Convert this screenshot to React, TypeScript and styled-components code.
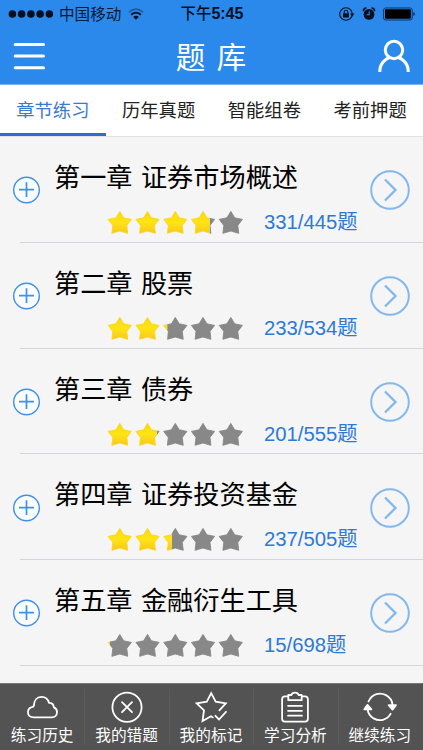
import React from "react";
import styled, { createGlobalStyle } from "styled-components";

const GlobalStyle = createGlobalStyle`
  * { box-sizing: border-box; }
  body {
    margin: 0;
    background: #f5f5f5;
    font-family: "Liberation Sans", "Noto Sans CJK SC", sans-serif;
    overflow: hidden;
  }
  svg { display: block; flex: none; }
`;

const Screen = styled.div`
  width: 423px;
  height: 750px;
  display: flex;
  flex-direction: column;
  background: #f5f5f5;
  overflow: hidden;
`;

const Header = styled.header`
  flex: none;
  height: 85px;
  background: #2c89ec;
  border-bottom: 1px solid #7cb5f3;
`;

const StatusBar = styled.div`
  height: 27px;
  padding: 0 7px 0 8px;
  display: grid;
  grid-template-columns: 1fr auto 1fr;
  align-items: center;
  color: #061a33;
`;

const StatusGroup = styled.div<{ $end?: boolean }>`
  display: flex;
  align-items: center;
  justify-content: ${(p) => (p.$end ? "flex-end" : "flex-start")};
`;

const Carrier = styled.span`
  margin: 0 7px 0 6px;
  font: 15.6px/27px "Noto Sans CJK SC", sans-serif;
  white-space: nowrap;
`;

const Clock = styled.div`
  font: 500 15.4px/27px "Liberation Sans", "Noto Sans CJK SC", sans-serif;
  color: #04101f;
  white-space: nowrap;
  b { font-size: 16px; }
`;

const NavBar = styled.div`
  height: 57px;
  padding: 0 12px 0 13px;
  display: grid;
  grid-template-columns: 1fr auto 1fr;
  align-items: center;
  color: #fff;
`;

const Title = styled.h1`
  margin: 0;
  font: 400 29.5px/57px "Noto Sans CJK SC", sans-serif;
  word-spacing: 5px;
  margin-left: -2px;
`;

const NavEnd = styled.div`
  justify-self: end;
`;

const Tabs = styled.nav`
  flex: none;
  height: 52px;
  display: grid;
  grid-template-columns: repeat(4, 1fr);
  background: #fff;
  border-bottom: 1px solid #e2e2e2;
`;

const Tab = styled.div<{ $active?: boolean }>`
  height: 51px;
  text-align: center;
  font: 18.3px/49px "Noto Sans CJK SC", sans-serif;
  color: ${(p) => (p.$active ? "#3b78d0" : "#222")};
  border-bottom: 3px solid ${(p) => (p.$active ? "#2f6bc9" : "transparent")};
`;

const List = styled.main`
  flex: 1;
  min-height: 0;
  overflow: hidden;
`;

const Row = styled.section`
  height: 105.75px;
  margin-left: 20px;
  padding: 2px 13px 0 0;
  display: flex;
  align-items: center;
  border-bottom: 1px solid #d2d5da;
`;

const Expand = styled.div`
  margin-left: -8px;
  width: 42px;
`;

const RowBody = styled.div`
  flex: 1;
  height: 100%;
  padding-top: 18px;
`;

const Chapter = styled.div`
  height: 38px;
  font: 26.2px/38px "Noto Sans CJK SC", sans-serif;
  word-spacing: 2.5px;
  color: #000;
  white-space: nowrap;
`;

const Progress = styled.div`
  margin: 15px 0 0 53px;
  display: flex;
  align-items: center;
  height: 25px;
`;

const Count = styled.div`
  margin-left: 19px;
  font: 20.3px/25px "Liberation Sans", "Noto Sans CJK SC", sans-serif;
  color: #2c7ad6;
  white-space: nowrap;
`;

const BottomBar = styled.footer`
  flex: none;
  height: 67px;
  display: grid;
  grid-template-columns: repeat(5, 1fr);
  margin-right: 1px;
  background: #535353;
  box-shadow: 1px 0 #535353;
  border-top: 1px solid #777;
`;

const BottomItem = styled.div`
  display: flex;
  flex-direction: column;
  align-items: center;
  padding-top: 5px;
  color: #fff;
  & + & {
    background: linear-gradient(#5c5c5c, #5c5c5c) 0 5px / 1px 55px no-repeat;
  }
`;

const BottomLabel = styled.div`
  font: 15.7px/22px "Noto Sans CJK SC", sans-serif;
  margin-top: -1px;
  white-space: nowrap;
`;

const starPath = (cx: number) =>
  `M${cx} 1.4L${cx + 3.9} 7.8L${cx + 11.6} 9.4L${cx + 7} 15.4L${cx + 7.9} 23.3L${cx} 21L${cx - 7.9} 23.3L${cx - 7} 15.4L${cx - 11.6} 9.4L${cx - 3.9} 7.8Z`;
const starCentres = [12.8, 40.5, 68.3, 96, 123.8];

function Stars({ id, ratio }: { id: string; ratio: number }) {
  return (
    <svg width="138" height="25" viewBox="0 0 138 25">
      <defs>
        <linearGradient id={`${id}-gold`} x1="0" y1="0" x2="0" y2="1">
          <stop offset="0" stopColor="#fbd90c" />
          <stop offset=".5" stopColor="#ffe414" />
          <stop offset="1" stopColor="#f8c71c" />
        </linearGradient>
        <clipPath id={`${id}-done`}>
          <rect width={138 * ratio} height="25" />
        </clipPath>
        <clipPath id={`${id}-left`}>
          <rect x={138 * ratio} width="138" height="25" />
        </clipPath>
      </defs>
      <g clipPath={`url(#${id}-left)`}>
        {starCentres.map((c) => (
          <path key={c} d={starPath(c)} fill="#888" stroke="#888" strokeWidth=".9" strokeLinejoin="round" />
        ))}
      </g>
      <g clipPath={`url(#${id}-done)`}>
        {starCentres.map((c) => (
          <path key={c} d={starPath(c)} fill={`url(#${id}-gold)`} stroke="#f9d71c" strokeWidth=".9" strokeLinejoin="round" />
        ))}
      </g>
    </svg>
  );
}

const PlusIcon = () => (
  <svg width="28" height="28" viewBox="0 0 28 28" fill="none" stroke="#3d91e6">
    <circle cx="14.5" cy="14" r="12.8" fill="#fafcff" strokeWidth="1.4" />
    <path d="M7 13.6H22M14.5 6.3V21" strokeWidth="1.7" />
  </svg>
);

const GoIcon = () => (
  <svg width="40" height="40" viewBox="0 0 40 40" fill="none" stroke="#83b8ee" strokeWidth="2">
    <circle cx="20" cy="20" r="18.8" />
    <path d="M15 9.5L25.5 20L15 30.5" strokeWidth="2.3" />
  </svg>
);

const SignalIcon = () => (
  <svg width="45" height="10" viewBox="0 0 45 10" fill="#04101f">
    {[4.4, 13.6, 22.9, 32.1, 41.4].map((x) => (
      <circle key={x} cx={x} cy="5" r="3.8" />
    ))}
  </svg>
);

const WifiIcon = () => (
  <svg width="16" height="12" viewBox="0 0 16 12" fill="none" strokeWidth="1.8">
    <path d="M1 4.1Q8 -1.9 15 4.1" stroke="#1d5ca0" />
    <path d="M3.2 6.7Q8 2.5 12.8 6.7" stroke="#04101f" />
    <path d="M5.2 8.9Q8 6.6 10.8 8.9L8 11.8Z" fill="#04101f" stroke="none" />
  </svg>
);

const StatusIcons = () => (
  <svg width="78" height="16" viewBox="0 0 78 16" fill="#04101f">
    <circle cx="8" cy="8" r="6.3" fill="none" stroke="#04101f" strokeWidth="1.1" />
    <path d="M12 7.5H16.5L14.2 10.4Z" />
    <rect x="5" y="7.2" width="6" height="4.2" rx=".4" />
    <path d="M6.2 7.3V6a1.8 1.8 0 0 1 3.6 0V7.3" fill="none" stroke="#04101f" strokeWidth="1.1" />
    <circle cx="31" cy="8.4" r="5.4" />
    <path d="M25.4 5.2A3.2 3.2 0 0 1 28.5 2M36.6 5.2A3.2 3.2 0 0 0 33.5 2" fill="none" stroke="#04101f" strokeWidth="1.6" />
    <path d="M31.2 5.2V8.8H28.6" fill="none" stroke="#2c89ec" strokeWidth="1.1" />
    <rect x="45.6" y="2" width="28.6" height="12" rx="2" fill="none" stroke="#0a2a50" strokeWidth=".9" />
    <rect x="47" y="3.3" width="25.8" height="9.4" rx=".8" fill="#000" />
    <path d="M75.5 6a2.3 2.3 0 0 1 0 4Z" />
  </svg>
);

const MenuIcon = () => (
  <svg width="33" height="30" viewBox="0 0 33 30" stroke="#fff" strokeWidth="3" strokeLinecap="round">
    <path d="M2.2 3.5H30.5M2.2 15.1H30.5M2.2 26.8H30.5" />
  </svg>
);

const UserIcon = () => (
  <svg width="34" height="34" viewBox="0 0 34 34" fill="none" stroke="#fff" strokeWidth="3">
    <circle cx="17" cy="11" r="8.7" />
    <path d="M2.8 33V32C2.8 25 7.8 20.2 12.4 18.5M21.6 18.5C26.2 20.2 31.2 25 31.2 32V33" />
  </svg>
);

const iconProps = {
  width: 36,
  height: 36,
  viewBox: "0 0 36 36",
  fill: "none",
  stroke: "#fff",
  strokeWidth: 1.8,
  strokeLinejoin: "round" as const,
  strokeLinecap: "round" as const,
};

const CloudIcon = () => (
  <svg {...iconProps}>
    <path d="M9.6 28.4C6 28.4 4 26.1 4 23.2C4 20.3 6.1 18.3 8.8 17.9C8.9 17.8 9.2 17.3 9.8 17.1C9.9 11.7 12.7 7.9 17.5 7.9C21.4 7.9 24 10 25 13.8C28 13.8 29.7 15.5 29.8 18.3C31.8 19 33 20.9 33 23C33 26.2 30.9 28.4 27.8 28.4Z" />
  </svg>
);

const WrongIcon = () => (
  <svg {...iconProps}>
    <circle cx="18" cy="18.2" r="14.6" />
    <path d="M13 13.2L23 23.2M23 13.2L13 23.2" />
  </svg>
);

const MarkIcon = () => (
  <svg {...iconProps} strokeLinejoin="miter">
    <path d="M19.8 28.4L18 27.2L9.5 32L11 21.3L3.7 14.4L13.8 12.7L18.2 4.2L22.7 12.7L32.8 14.4L26.4 21.3" />
    <path d="M22.4 26.8L26 30.5L33 22.8" />
  </svg>
);

const ClipboardIcon = () => (
  <svg {...iconProps}>
    <path d="M11 7.3H8Q5.1 7.3 5.1 10.2V29.8Q5.1 32.7 8 32.7H28Q30.9 32.7 30.9 29.8V10.2Q30.9 7.3 28 7.3H25" />
    <path d="M11.3 11.2V6H14.4Q15 3.7 18 3.7Q21 3.7 21.6 6H24.7V11.2Z" />
    <path d="M11 16.8H25M11 21.8H25M11 26.7H25" strokeWidth="1.7" />
  </svg>
);

const RepeatIcon = () => (
  <svg {...iconProps}>
    <path d="M6.5 12.5C10.1 4.2 18.1 3.1 24 6.1C28 8.3 30.3 11.8 30.6 16.2" />
    <path d="M28.7 24.7C25.3 31.4 17.2 32.6 11.6 29.4C8.3 27.4 6.2 24.7 5.6 20.3" />
    <path d="M26.6 16.1H34L30.5 20.6ZM2.3 20.3L5.5 15.9L9.4 20.3Z" fill="#fff" />
  </svg>
);

const tabs = ["章节练习", "历年真题", "智能组卷", "考前押题"];

const chapters = [
  { title: "第一章 证券市场概述", done: 331, total: 445 },
  { title: "第二章 股票", done: 233, total: 534 },
  { title: "第三章 债券", done: 201, total: 555 },
  { title: "第四章 证券投资基金", done: 237, total: 505 },
  { title: "第五章 金融衍生工具", done: 15, total: 698 },
];

const actions = [
  { label: "练习历史", Icon: CloudIcon },
  { label: "我的错题", Icon: WrongIcon },
  { label: "我的标记", Icon: MarkIcon },
  { label: "学习分析", Icon: ClipboardIcon },
  { label: "继续练习", Icon: RepeatIcon },
];

export default function App() {
  return (
    <Screen>
      <GlobalStyle />
      <Header>
        <StatusBar>
          <StatusGroup>
            <SignalIcon />
            <Carrier>中国移动</Carrier>
            <WifiIcon />
          </StatusGroup>
          <Clock>下午<b>5:45</b></Clock>
          <StatusGroup $end>
            <StatusIcons />
          </StatusGroup>
        </StatusBar>
        <NavBar>
          <MenuIcon />
          <Title>题 库</Title>
          <NavEnd>
            <UserIcon />
          </NavEnd>
        </NavBar>
      </Header>
      <Tabs>
        {tabs.map((t, i) => (
          <Tab key={t} $active={i === 0}>{t}</Tab>
        ))}
      </Tabs>
      <List>
        {chapters.map((c, i) => (
          <Row key={c.title}>
            <Expand>
              <PlusIcon />
            </Expand>
            <RowBody>
              <Chapter>{c.title}</Chapter>
              <Progress>
                <Stars id={`ch${i}`} ratio={c.done / c.total} />
                <Count>{c.done}/{c.total}题</Count>
              </Progress>
            </RowBody>
            <GoIcon />
          </Row>
        ))}
      </List>
      <BottomBar>
        {actions.map(({ label, Icon }) => (
          <BottomItem key={label}>
            <Icon />
            <BottomLabel>{label}</BottomLabel>
          </BottomItem>
        ))}
      </BottomBar>
    </Screen>
  );
}
